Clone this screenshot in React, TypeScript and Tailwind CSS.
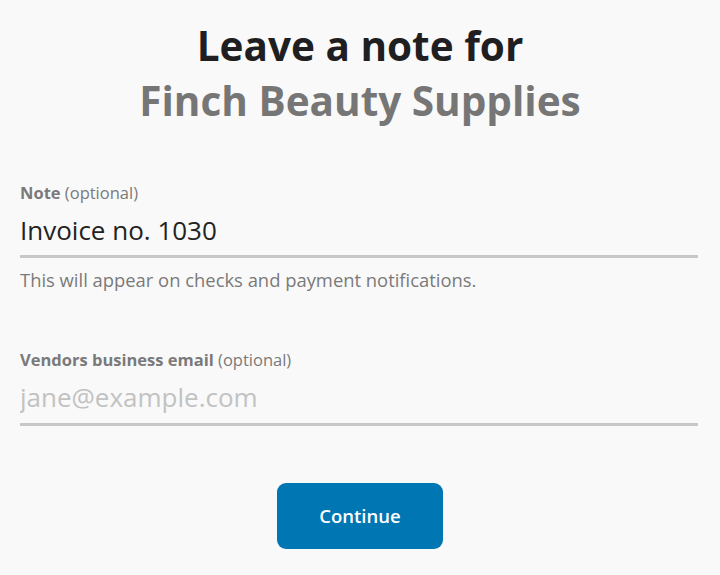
import React from 'react';

const font = { fontFamily: '"Open Sans", "Noto Sans", sans-serif' };

const App: React.FC = () => {
    return (
        <div className="min-h-[575px] w-[720px] bg-[#f9f9f9] text-[#222]" style={font}>
            <div className="pt-[18px] text-center">
                <h1 className="text-[40.5px] leading-[55px] font-bold text-[#1f1f21]">Leave a note for</h1>
                <h2 className="text-[40.5px] leading-[55px] font-bold text-[#767676]">Finch Beauty Supplies</h2>
            </div>

            <div className="pl-5 pr-[22px] mt-[54px]">
                <label className="block text-[16.5px] leading-[22px] text-[#7a7a7a]">
                    <span className="font-bold">Note</span> (optional)
                </label>
                <input
                    defaultValue="Invoice no. 1030"
                    className="mt-[8px] w-full bg-transparent text-[26px] leading-[36px] text-[#222] outline-none border-b-[3px] border-[#c8c8c8] pb-[7px]"
                />
                <p className="mt-[9px] text-[18.4px] leading-[26px] text-[#7a7a7a]">
                    This will appear on checks and payment notifications.
                </p>
            </div>

            <div className="pl-5 pr-[22px] mt-[56px]">
                <label className="block text-[16.5px] leading-[22px] text-[#7a7a7a]">
                    <span className="font-bold">Vendors business email</span> (optional)
                </label>
                <input
                    placeholder="jane@example.com"
                    className="mt-[8px] w-full bg-transparent text-[26px] leading-[36px] text-[#222] placeholder:text-[#c2c2c2] outline-none border-b-[3px] border-[#c8c8c8] pb-[8px]"
                />
            </div>

            <div className="flex justify-center mt-[57px]">
                <button className="w-[166px] h-[66px] rounded-[9px] bg-[#0077b3] text-white text-[18.5px] font-semibold">
                    Continue
                </button>
            </div>
        </div>
    );
};

export default App;
